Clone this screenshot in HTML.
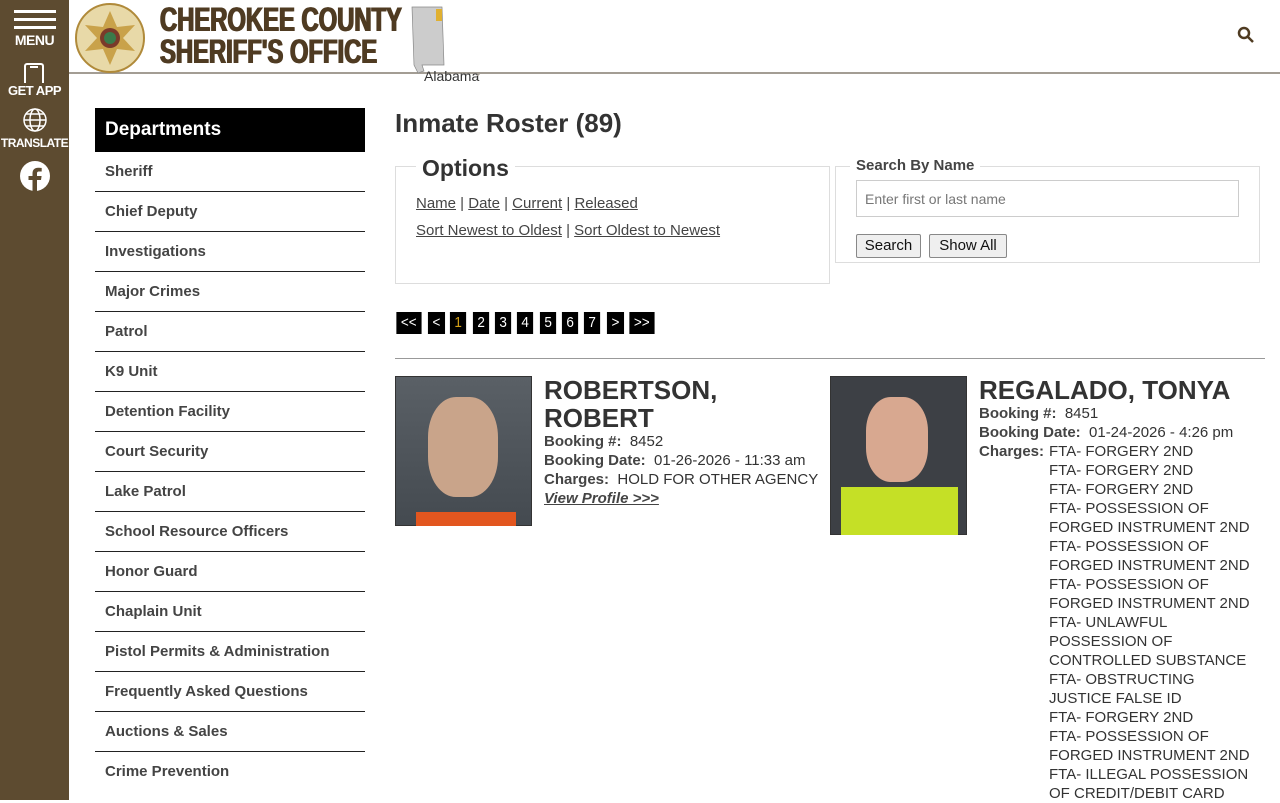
<!DOCTYPE html>
<html><head><style>
*{margin:0;padding:0;box-sizing:border-box}
body{width:1280px;height:800px;overflow:hidden;background:#fff;font-family:"Liberation Sans",sans-serif;color:#333;position:relative}
.side{position:absolute;left:0;top:0;width:69px;height:800px;background:#5d4b30;color:#fff;text-align:center}
.side .lbl{font-family:"Liberation Sans";font-weight:bold;font-size:13px;letter-spacing:-0.5px}
.hdr{position:absolute;left:69px;top:0;right:0;height:74px;border-bottom:2px solid #a39d94}
.title{position:absolute;left:91px;top:4px;font-weight:bold;color:#4f3b22;font-size:34px;line-height:32px;transform:scaleX(.70);transform-origin:left;white-space:nowrap;text-shadow:1px 0 0 #4f3b22,-1px 0 0 #4f3b22}
.nav{position:absolute;left:95px;top:108px;width:270px}
.nav .head{background:#000;color:#fff;font-weight:bold;font-size:19px;height:44px;line-height:44px;padding-left:10px}
.nav .it{height:40px;line-height:39px;border-bottom:1px solid #222;padding-left:10px;font-weight:bold;font-size:15px;color:#444}
.main{position:absolute;left:395px}
a{color:#444;text-decoration:underline}
.pg span{display:inline-block;background:#000;color:#fff;height:22px;line-height:22px;padding:0 5px;font-size:15px;margin-right:4px;transform:scaleX(.9)}
.lab{font-weight:bold;color:#444}
.card{font-size:15px;line-height:19px}
</style></head><body>
<div class="side">
 <div style="position:absolute;left:14px;top:10px;width:42px;height:3px;background:#fff"></div>
 <div style="position:absolute;left:14px;top:18px;width:42px;height:3px;background:#fff"></div>
 <div style="position:absolute;left:14px;top:26px;width:42px;height:3px;background:#fff"></div>
 <div class="lbl" style="position:absolute;top:32px;width:69px;font-size:14px">MENU</div>
 <div style="position:absolute;left:24px;top:63px;width:20px;height:20px;border:2px solid #fff;border-bottom:none;border-radius:3px 3px 0 0"></div>
 <div style="position:absolute;left:30px;top:66px;width:8px;height:2px;background:#fff"></div>
 <div class="lbl" style="position:absolute;top:83px;width:69px">GET APP</div>
 <svg style="position:absolute;left:23px;top:108px" width="24" height="26" viewBox="0 0 24 26" fill="none" stroke="#fff" stroke-width="1.5"><circle cx="12" cy="12" r="11"/><ellipse cx="12" cy="12" rx="5" ry="11"/><path d="M1 12h22M3 6h18M3 18h18"/></svg>
 <div class="lbl" style="position:absolute;top:136px;width:69px;font-size:12px">TRANSLATE</div>
 <svg style="position:absolute;left:19px;top:160px" width="32" height="32" viewBox="0 0 32 32"><circle cx="16" cy="16" r="15" fill="#fff"/><path d="M18 32V20h4l.6-4H18v-2.5c0-1.2.4-2 2-2h2.7V8c-.5 0-2-.2-3.6-.2-3.5 0-5.6 2-5.6 5.8V16H9.5v4h4v12z" fill="#5d4b30"/></svg>
</div>
<div class="hdr">
 <svg style="position:absolute;left:6px;top:3px" width="70" height="70" viewBox="0 0 70 70"><circle cx="35" cy="35" r="34" fill="#e8d9a8" stroke="#b08a3a" stroke-width="2"/><polygon points="35,8 42,24 60,22 48,35 60,48 42,46 35,62 28,46 10,48 22,35 10,22 28,24" fill="#c9a24a"/><circle cx="35" cy="35" r="10" fill="#7a3a2a"/><circle cx="35" cy="35" r="6" fill="#3a7a4a"/></svg>
 <div class="title">CHEROKEE COUNTY<br>SHERIFF'S OFFICE</div>
 <svg style="position:absolute;left:339px;top:5px" width="40" height="72" viewBox="0 0 40 72"><path d="M4 2h30l2 58h-22l2 6-6 2-4-8z" fill="#ccc" stroke="#888" stroke-width=".7"/><path d="M28 4h6v12h-6z" fill="#e0b030"/></svg>
 <div style="position:absolute;left:355px;top:68px;font-size:14px;color:#333">Alabama</div>
 <svg style="position:absolute;left:408px;top:72px" width="20" height="4"><path d="M0 4L4 0h16" stroke="#a39d94" fill="none" stroke-width="1.5"/></svg>
 <svg style="position:absolute;left:1168px;top:26px" width="18" height="18" viewBox="0 0 18 18" fill="none" stroke="#4f3b22" stroke-width="2.5"><circle cx="7" cy="7" r="5"/><path d="M11 11l5 5"/></svg>
</div>
<div class="nav">
 <div class="head">Departments</div>
 <div class="it">Sheriff</div><div class="it">Chief Deputy</div><div class="it">Investigations</div><div class="it">Major Crimes</div><div class="it">Patrol</div><div class="it">K9 Unit</div><div class="it">Detention Facility</div><div class="it">Court Security</div><div class="it">Lake Patrol</div><div class="it">School Resource Officers</div><div class="it">Honor Guard</div><div class="it">Chaplain Unit</div><div class="it">Pistol Permits &amp; Administration</div><div class="it">Frequently Asked Questions</div><div class="it">Auctions &amp; Sales</div><div class="it" style="border:none">Crime Prevention</div>
</div>
<div class="main" style="top:108px;font-size:26px;font-weight:bold;color:#333">Inmate Roster (89)</div>
<div class="main" style="top:166px;width:435px;height:118px;border:1px solid #ddd"></div>
<div class="main" style="left:416px;top:155px;font-size:23px;font-weight:bold;background:#fff;padding:0 6px 0 6px;color:#333">Options</div>
<div class="main" style="left:416px;top:195px;font-size:15px;color:#444"><a>Name</a> | <a>Date</a> | <a>Current</a> | <a>Released</a></div>
<div class="main" style="left:416px;top:222px;font-size:15px;color:#444"><a>Sort Newest to Oldest</a> | <a>Sort Oldest to Newest</a></div>
<div class="main" style="left:835px;top:166px;width:425px;height:97px;border:1px solid #ddd"></div>
<div class="main" style="left:850px;top:157px;font-size:15px;font-weight:bold;background:#fff;padding:0 6px;color:#444">Search By Name</div>
<div class="main" style="left:856px;top:180px;width:383px;height:37px;border:1px solid #ccc;font-size:14px;color:#777;padding:10px 8px">Enter first or last name</div>
<div class="main" style="left:856px;top:234px;width:65px;height:24px;border:1px solid #888;background:#efefef;border-radius:2px;font-size:15px;text-align:center;line-height:22px;color:#111">Search</div>
<div class="main" style="left:929px;top:234px;width:78px;height:24px;border:1px solid #888;background:#efefef;border-radius:2px;font-size:15px;text-align:center;line-height:22px;color:#111">Show All</div>
<div class="main pg" style="top:312px;font-size:0;left:395px;white-space:nowrap"><span>&lt;&lt;</span><span>&lt;</span><span style="color:#d4a017">1</span><span>2</span><span>3</span><span>4</span><span>5</span><span>6</span><span>7</span><span>&gt;</span><span>&gt;&gt;</span></div>
<div class="main" style="top:358px;width:870px;border-top:1px solid #999"></div>
<div class="main" style="top:376px;width:137px;height:150px;background:linear-gradient(#5a6066,#444a50);border:1px solid #333"><div style="position:absolute;left:32px;top:20px;width:70px;height:100px;border-radius:40%;background:#c9a48a"></div><div style="position:absolute;left:20px;top:135px;width:100px;height:14px;background:#e2561f"></div></div>
<div class="main card" style="left:544px;top:376px;width:280px">
 <div style="font-size:26px;font-weight:bold;line-height:28px;color:#333">ROBERTSON,<br>ROBERT</div>
 <div><span class="lab">Booking #:</span>&nbsp; 8452</div>
 <div><span class="lab">Booking Date:</span>&nbsp; 01-26-2026 - 11:33 am</div>
 <div><span class="lab">Charges:</span>&nbsp; HOLD FOR OTHER AGENCY</div>
 <div><a style="font-weight:bold;font-style:italic">View Profile &gt;&gt;&gt;</a></div>
</div>
<div class="main" style="left:830px;top:376px;width:137px;height:159px;background:#3d4045;border:1px solid #333"><div style="position:absolute;left:35px;top:20px;width:62px;height:85px;border-radius:40%;background:#d8a890"></div><div style="position:absolute;left:10px;top:110px;width:117px;height:48px;background:#c5e026"></div></div>
<div class="main card" style="left:979px;top:376px;width:290px">
 <div style="font-size:26px;font-weight:bold;line-height:28px;color:#333">REGALADO, TONYA</div>
 <div><span class="lab">Booking #:</span>&nbsp; 8451</div>
 <div><span class="lab">Booking Date:</span>&nbsp; 01-24-2026 - 4:26 pm</div>
 <div style="display:flex"><span class="lab" style="width:70px">Charges:</span><div style="width:210px">FTA- FORGERY 2ND<br>FTA- FORGERY 2ND<br>FTA- FORGERY 2ND<br>FTA- POSSESSION OF FORGED INSTRUMENT 2ND<br>FTA- POSSESSION OF FORGED INSTRUMENT 2ND<br>FTA- POSSESSION OF FORGED INSTRUMENT 2ND<br>FTA- UNLAWFUL POSSESSION OF CONTROLLED SUBSTANCE<br>FTA- OBSTRUCTING JUSTICE FALSE ID<br>FTA- FORGERY 2ND<br>FTA- POSSESSION OF FORGED INSTRUMENT 2ND<br>FTA- ILLEGAL POSSESSION OF CREDIT/DEBIT CARD</div></div>
</div>
</body></html>
